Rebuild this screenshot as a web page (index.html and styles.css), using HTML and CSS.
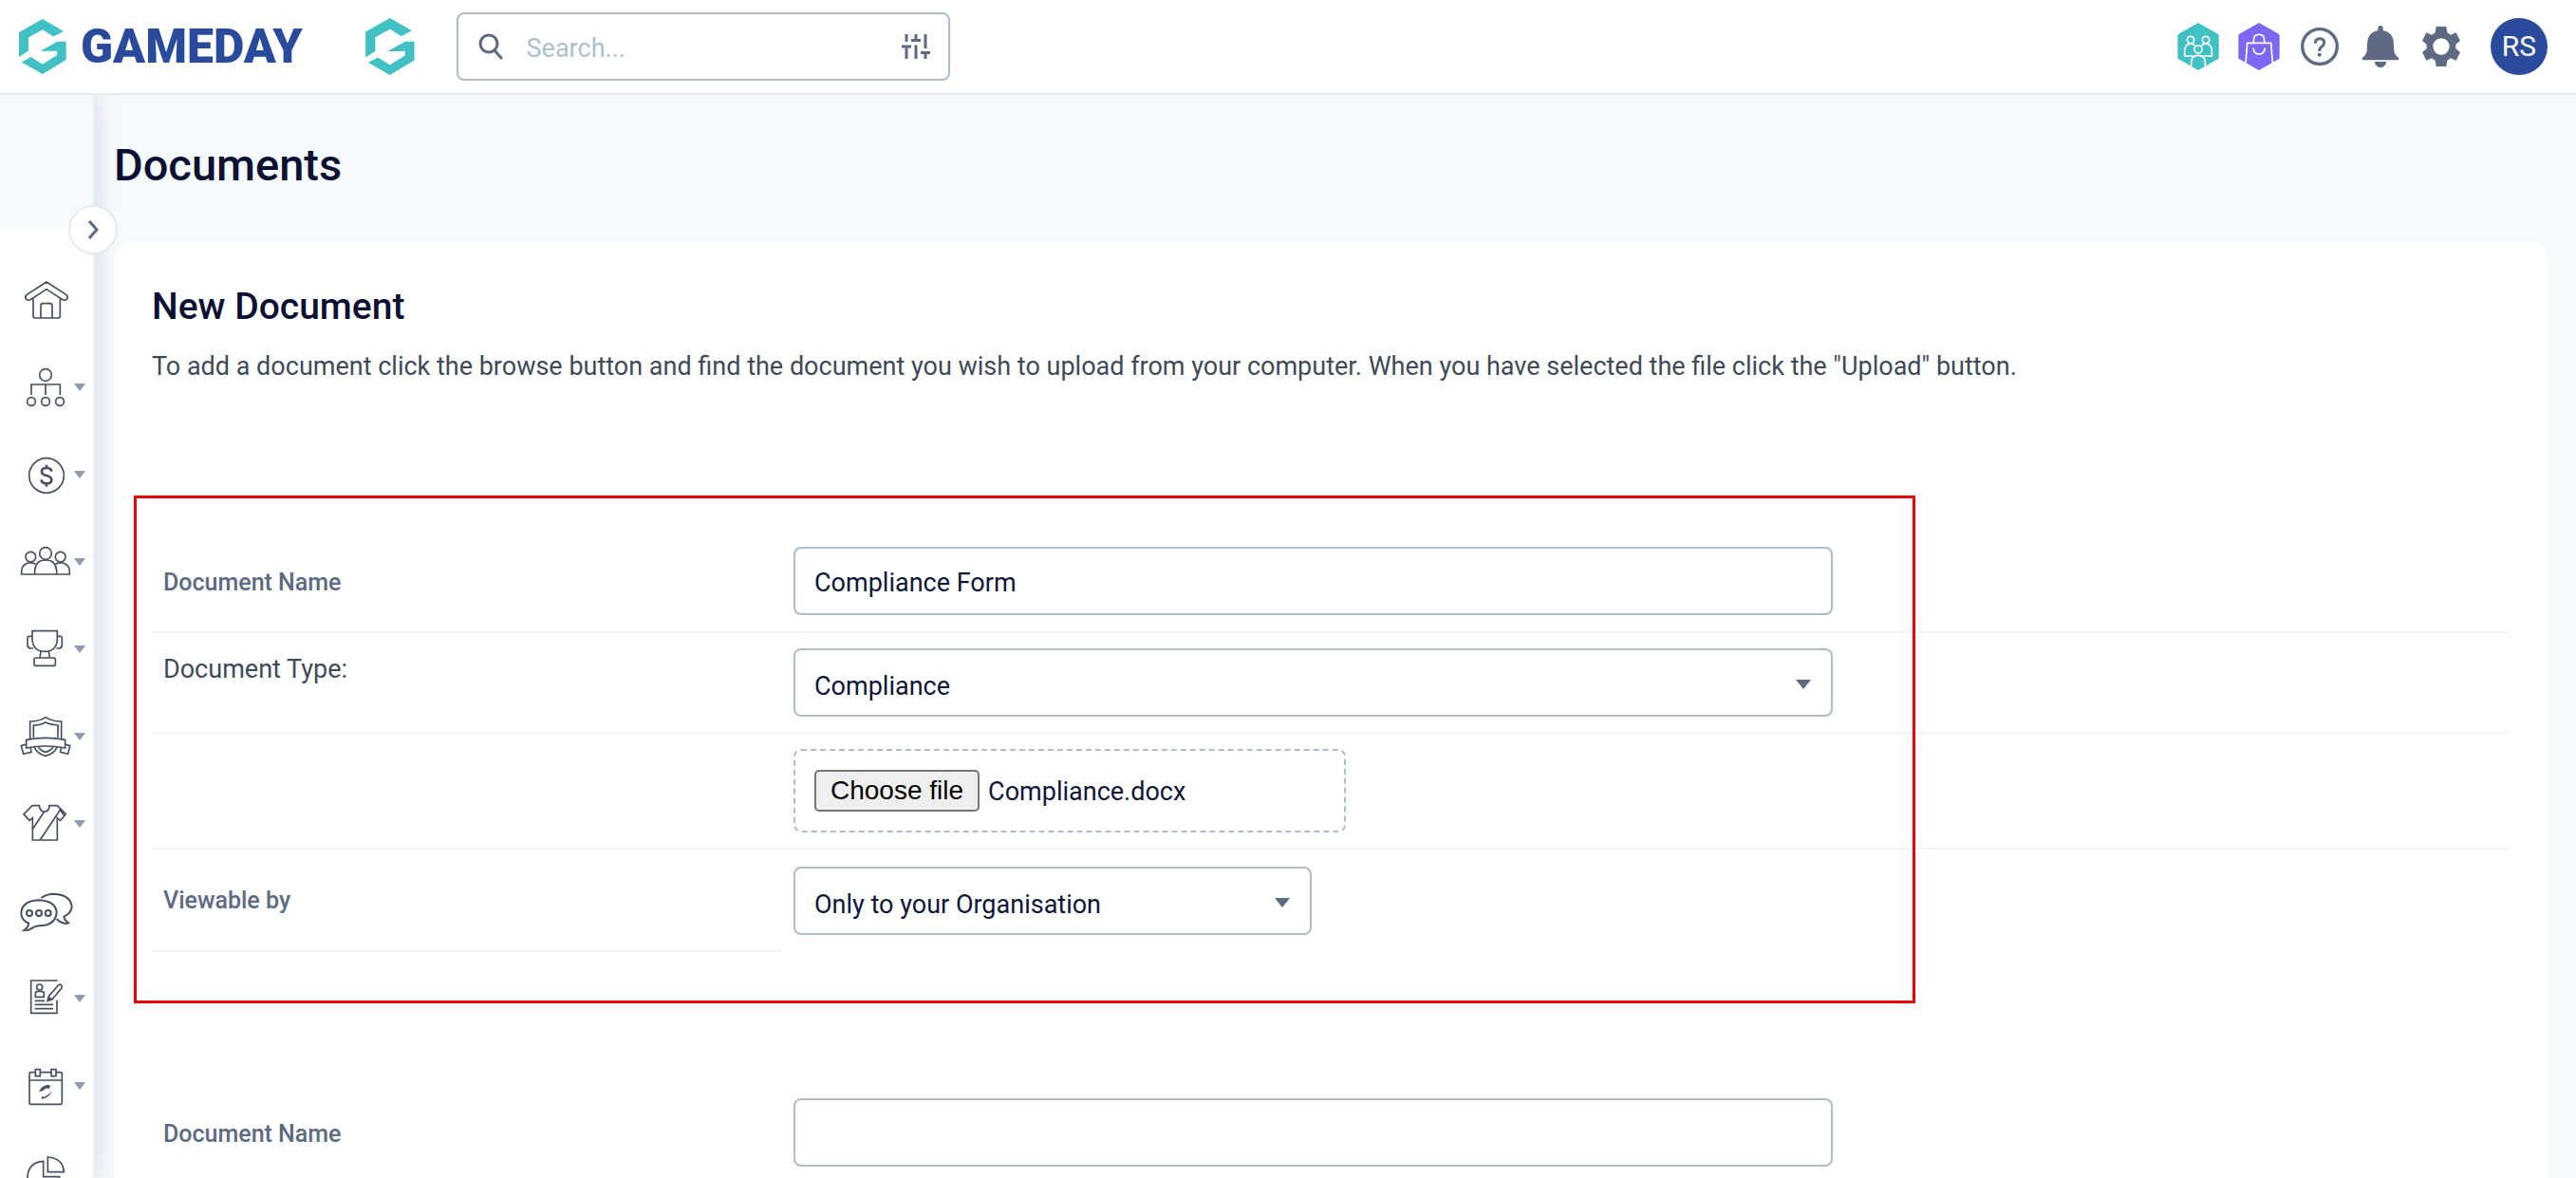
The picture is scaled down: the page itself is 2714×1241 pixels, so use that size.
FILE: index.html
```html
<!DOCTYPE html>
<html lang="en">
<head>
<meta charset="utf-8">
<title>Documents - GameDay</title>
<meta name="viewport" content="width=device-width, initial-scale=1">
<link rel="stylesheet" href="styles.css">
</head>
<body>
<header class="topbar">
  <a class="brand" href="#" aria-label="GameDay home">
    <svg class="brand-mark" viewBox="60 56 151 175" aria-hidden="true"><path d="M135 56 202 95 170 112 135 90 90 115V158L60 177V98ZM210 128V186L135 231 68 193 98 177 135 200 181 171V158H128L182 128Z"/></svg>
    <span class="brand-name">GAMEDAY</span>
  </a>
  <a class="org-logo" href="#" aria-label="Organisation">
    <svg viewBox="60 56 151 175" aria-hidden="true"><path d="M135 56 202 95 170 112 135 90 90 115V158L60 177V98ZM210 128V186L135 231 68 193 98 177 135 200 181 171V158H128L182 128Z"/></svg>
  </a>
  <form class="search" role="search">
    <svg class="search-icon" viewBox="0 0 26 28" aria-hidden="true"><circle cx="11" cy="11" r="9"/><path d="M17 18l7 8"/></svg>
    <input class="search-input" type="search" placeholder="Search..." aria-label="Search">
    <button class="search-filter" type="button" aria-label="Search filters">
      <svg viewBox="0 0 30 26" aria-hidden="true"><path d="M5 0v8M0 13h10M5 13v13M15 0v6M10 6.500h10M15 11.500v14.500M25 0v15M20 19.500h10M25 20v6"/></svg>
    </button>
  </form>
  <nav class="tools" aria-label="Account">
    <a href="#" class="tool" aria-label="Members"><svg width="44" height="50" viewBox="0 0 132 150"><path fill="#41c1c4" d="M66 0 128 35Q131 37 131 40V110Q131 113 128 115L66 150 4 115Q1 113 1 110V40Q1 37 4 35Z"/><g fill="none" stroke="#fff" stroke-width="5"><circle cx="42" cy="54" r="11"/><circle cx="90" cy="54" r="11"/><circle cx="66" cy="84" r="12"/><path d="M52 105H23V88Q23 68 42 66 52 66 56 73M76 73Q80 66 90 66 109 68 109 88V105H80M44 137V124Q46 103 66 103 86 103 88 124V137"/></g></svg></a>
    <a href="#" class="tool" aria-label="Shop"><svg width="44" height="50" viewBox="0 0 132 150"><path fill="#7c67f0" d="M66 0 128 35Q131 37 131 40V110Q131 113 128 115L66 150 4 115Q1 113 1 110V40Q1 37 4 35Z"/><path fill="none" stroke="#fff" stroke-width="5" d="M24 127 29 64H104L109 127M49 64V55Q49 37 66 37 83 37 83 55V64M48 80Q50 99 66 99 83 99 85 80"/></svg></a>
    <a href="#" class="tool" aria-label="Help"><svg width="40" height="40" viewBox="0 0 120 120"><circle cx="60" cy="60" r="55" fill="none" stroke="#5d6a82" stroke-width="10"/><path fill="none" stroke="#5d6a82" stroke-width="9" d="M46 50Q46 35 60 35 74 35 74 48 74 55 66 61 59 66 59 75"/><circle cx="59" cy="86" r="6" fill="#5d6a82"/></svg></a>
    <a href="#" class="tool" aria-label="Notifications"><svg width="40" height="44" viewBox="0 0 120 132"><path fill="#5d6a82" d="M60 0Q68 0 68 8V15Q98 22 101 48L103 80Q106 94 117 101 120 108 114 109H6Q0 108 3 101 14 94 17 80L19 48Q22 22 52 15V8Q52 0 60 0ZM41 114H79Q75 132 60 132 45 132 41 114Z"/></svg></a>
    <a href="#" class="tool" aria-label="Settings"><svg width="40" height="42" viewBox="0 0 120 126"><path fill="#5d6a82" fill-rule="evenodd" d="M44 0H76L79 19 90 26 107 19 120 45 106 56V70L120 81 107 107 90 100 79 107 76 126H44L41 107 30 100 13 107 0 81 14 70V56L0 45 13 19 30 26 41 19ZM60 37A26 26 0 1 0 60 89 26 26 0 1 0 60 37Z"/></svg></a>
    <button class="avatar" type="button">RS</button>
  </nav>
</header>

<div class="shell">
  <nav class="sidebar" aria-label="Main">
    <ul class="side-list">
      <li><a href="#" aria-label="Home"><svg viewBox="0 270 294 276"><path d="M147 351 210 392Q217 399 211 406 205 411 198 407L147 374 96 407Q89 411 83 406 77 399 84 392ZM105 404V458Q105 465 112 465H183Q190 465 190 458V404M129 464V426Q129 419 136 419H157Q165 419 165 426V464"/></svg></a></li>
      <li><a href="#" aria-label="Structure"><svg viewBox="0 546 294 276"><circle cx="144" cy="645" r="19"/><circle cx="99" cy="729" r="13"/><circle cx="144" cy="729" r="13"/><circle cx="189" cy="729" r="13"/><path d="M99 708V675H190V708M144 675V708"/><path class="caret" d="M234 672h36l-18 24z"/></svg></a></li>
      <li><a href="#" aria-label="Finance"><svg viewBox="0 822 294 276"><circle cx="147" cy="963" r="55"/><path stroke-width="8" d="M163 950Q162 939 147 939 132 939 132 950 132 960 147 963 163 967 163 977 163 988 147 988 131 988 131 976M147 929V940M147 987V998"/><path class="caret" d="M234 948h36l-18 24z"/></svg></a></li>
      <li><a href="#" aria-label="Members"><svg viewBox="0 48 294 276"><circle cx="144" cy="159" r="19"/><circle cx="97" cy="170" r="16"/><circle cx="191" cy="170" r="16"/><path d="M110 225V212Q113 180 144 180 176 180 179 212V225M112 193Q105 188 97 188 69 190 68 216V225H220V216Q219 190 191 188 183 188 176 193"/><path class="caret" d="M234 174h36l-18 24z"/></svg></a></li>
      <li><a href="#" aria-label="Competitions"><svg viewBox="0 324 294 276"><path d="M102 404H181V432Q178 469 142 469 105 469 102 432ZM100 421H90Q87 421 87 426V448Q88 459 96 459H105M182 421H192Q196 421 196 426V448Q195 459 187 459H178M129 469 126 488M154 469 157 488"/><rect x="108" y="489" width="67" height="25" rx="5"/><path class="caret" d="M234 450h36l-18 24z"/></svg></a></li>
      <li><a href="#" aria-label="Clubs"><svg viewBox="0 600 294 276"><path d="M95 744V690Q125 690 144 677 164 690 194 690V744M106 741V702Q128 702 144 693 161 702 183 702V741M83 748Q144 736 206 748V774Q144 762 83 774ZM83 762 67 767 74 793 99 787 97 773M206 762 221 767 215 793 191 787 193 773M109 772Q118 792 144 799 171 792 180 772M121 771Q128 782 144 787 161 782 168 771"/><path class="caret" d="M234 726h36l-18 24z"/></svg></a></li>
      <li><a href="#" aria-label="Uniforms"><svg viewBox="0 876 294 276"><path d="M102 956H124Q126 975 141 975 155 975 156 956H181L208 983 191 1003 181 995V1065H103V995L93 1003 75 983ZM140 975 104 1029M191 968 127 1064M188 967 203 988"/><path class="caret" d="M234 1002h36l-18 24z"/></svg></a></li>
      <li><a href="#" aria-label="Communications"><svg viewBox="0 102 294 276"><g stroke-width="6"><path d="M91 278Q67 268 67 245 70 207 122 205 177 207 179 245 175 286 122 286 108 288 97 296 88 301 76 300 89 291 91 278ZM130 198Q147 185 171 185 224 188 227 226 225 246 202 257 204 269 216 277 201 284 179 265"/><circle cx="93" cy="246" r="9"/><circle cx="123" cy="246" r="9"/><circle cx="152" cy="246" r="9"/></g></svg></a></li>
      <li><a href="#" aria-label="Registrations"><svg viewBox="0 378 294 276"><path d="M182 459H98V562H180V521M110 523H141M110 535H168M110 548H168"/><circle cx="125" cy="480" r="9"/><path d="M112 511V500Q112 493 119 493H132Q139 493 139 500V511ZM154 509 184 474Q189 469 194 474 198 479 194 484L165 518 151 522Z"/><path fill="#465062" d="M153 512 164 518 151 523Z"/><path class="caret" d="M234 504h36l-18 24z"/></svg></a></li>
      <li><a href="#" aria-label="Calendar"><svg viewBox="0 654 294 276"><rect x="93" y="749" width="103" height="101" rx="5"/><path d="M93 774H196"/><path fill="#fff" d="M112 740H127V761H112ZM162 740H177V761H162Z"/><path fill="#465062" stroke="none" d="M123 810Q130 791 154 788L159 793 154 802 147 799 134 808ZM164 808Q160 824 140 832L130 833 133 824 138 827Q153 823 164 808Z"/><path class="caret" d="M234 780h36l-18 24z"/></svg></a></li>
      <li><a href="#" aria-label="Reports"><svg viewBox="0 930 294 276"><path d="M151 1017Q199 1020 202 1064H151ZM137 1030Q89 1034 87 1080 89 1130 137 1134 183 1130 188 1079H137Z"/></svg></a></li>
    </ul>
  </nav>
  <button class="side-toggle" type="button" aria-label="Expand menu"><svg viewBox="0 0 12 20" aria-hidden="true"><path d="M2 1l8 9-8 9"/></svg></button>

  <main class="content">
    <h1 class="page-title">Documents</h1>
    <section class="card">
      <h2 class="card-title">New Document</h2>
      <p class="card-intro">To add a document click the browse button and find the document you wish to upload from your computer. When you have selected the file click the "Upload" button.</p>
      <form>
        <div class="entry">
          <div class="row row-first">
            <label class="cell-label" for="name1">Document Name</label>
            <div class="cell"><input class="field" id="name1" type="text" value="Compliance Form"></div>
          </div>
          <div class="row">
            <label class="cell-label cell-label-top" for="type1">Document Type:</label>
            <div class="cell"><div class="select"><select class="field" id="type1"><option>Compliance</option></select></div></div>
          </div>
          <div class="row">
            <span></span>
            <div class="cell">
              <div class="file-drop">
                <input class="file-input" id="file1" type="file" aria-label="Document file">
                <label class="file-button" for="file1">Choose file</label>
                <span class="file-name">Compliance.docx</span>
              </div>
            </div>
          </div>
          <div class="row row-last">
            <label class="cell-label" for="view1">Viewable by</label>
            <div class="cell"><div class="select select-short"><select class="field" id="view1"><option>Only to your Organisation</option></select></div></div>
          </div>
          <div class="highlight"></div>
        </div>
        <div class="entry">
          <div class="row row-first">
            <label class="cell-label" for="name2">Document Name</label>
            <div class="cell"><input class="field" id="name2" type="text"></div>
          </div>
        </div>
      </form>
    </section>
  </main>
</div>
</body>
</html>
```
FILE: styles.css
```css
* { box-sizing: border-box; }

body {
  margin: 0;
  height: 100vh;
  display: flex;
  flex-direction: column;
  overflow: hidden;
  background: #f5fafd;
  color: #3f4a59;
  font-family: Roboto, "Liberation Sans", sans-serif;
  font-size: 27px;
  line-height: 40px;
}

a { color: inherit; text-decoration: none; }
svg { display: block; }

/* Top bar */
.topbar {
  position: relative;
  z-index: 3;
  flex: none;
  height: 100px;
  display: flex;
  align-items: center;
  padding: 0 30px 0 20px;
  background: #fff;
  border-bottom: 2px solid #e6eaf3;
}
.brand { display: flex; align-items: center; gap: 15px; color: #2a4b9b; }
.brand-mark { width: 50px; height: 58px; fill: #41c1c4; }
.brand-name { font-size: 50px; font-weight: 900; line-height: 58px; }
.org-logo { margin-left: 66px; }
.org-logo svg { width: 52px; height: 60px; fill: #41c1c4; }

.search {
  display: flex;
  align-items: center;
  width: 520px;
  height: 72px;
  margin-left: 44px;
  padding: 0 19px 0 21px;
  border: 2px solid #aebccb;
  border-radius: 8px;
}
.search-icon { width: 26px; height: 28px; fill: none; stroke: #5d6a82; stroke-width: 3; stroke-linecap: round; }
.search-input {
  flex: 1;
  min-width: 0;
  margin-left: 25px;
  padding: 4px 0 0;
  border: 0;
  outline: 0;
  background: none;
  color: #10153a;
  font: inherit;
}
.search-input::placeholder { color: #aebfce; opacity: 1; }
.search-filter { padding: 0; border: 0; background: none; }
.search-filter svg { width: 30px; height: 26px; fill: none; stroke: #5d6a82; stroke-width: 3; }

.tools { display: flex; align-items: center; gap: 20px; margin-left: auto; }
.tool { display: flex; justify-content: center; width: 44px; }
.avatar {
  width: 60px;
  height: 60px;
  margin-left: 10px;
  padding: 0;
  border: 0;
  border-radius: 50%;
  background: #2a4b9b;
  color: #fff;
  font: 30px/60px Roboto, sans-serif;
}

/* Page shell */
.shell { position: relative; flex: 1; min-height: 0; display: flex; }

.sidebar {
  flex: none;
  width: 100px;
  padding-top: 140px;
  overflow: hidden;
  background: #fff linear-gradient(#f5fafd, #f5fafd) no-repeat 0 0 / 100% 140px;
  border-right: 2px solid #ebeff8;
  box-shadow: 0 0 24px rgba(70, 85, 120, 0.22);
}
.side-list { margin: 0; padding: 30px 0 0; list-style: none; }
.side-list svg {
  width: 98px;
  height: 92px;
  fill: none;
  stroke: #465062;
  stroke-width: 5;
}
.side-list .caret { fill: #8e9bb0; stroke: none; }

.side-toggle {
  position: absolute;
  z-index: 2;
  top: 116px;
  left: 72px;
  width: 52px;
  height: 52px;
  display: flex;
  align-items: center;
  justify-content: center;
  padding: 0;
  border: 2px solid #e6eaf1;
  border-radius: 50%;
  background: #fff;
}
.side-toggle svg { width: 12px; height: 20px; fill: none; stroke: #5d6a82; stroke-width: 3; }

.content {
  flex: 1;
  min-width: 0;
  padding: 44px 30px 0 20px;
  overflow: auto;
  scrollbar-width: none;
}
.page-title { margin: 0 0 50px; color: #0c1033; font-size: 47px; font-weight: 500; line-height: 60px; }

/* Card */
.card {
  position: relative;
  z-index: 1;
  padding: 45px 40px;
  border-radius: 20px;
  background: #fff;
}
.card-title { margin: 0 0 19px; color: #0c1033; font-size: 39px; font-weight: 500; line-height: 48px; }
.card-intro { margin: 0; }

/* Form rows */
.entry { position: relative; margin-top: 154px; }
.entry + .entry { margin-top: 138px; }
.row {
  display: grid;
  grid-template-columns: minmax(0, 664px) minmax(0, 1fr);
  border-bottom: 2px solid #f0f4fb;
}
.cell { padding: 16px 12px; }
.cell-label {
  display: flex;
  align-items: center;
  padding: 18px 12px 16px;
  color: #5d6a82;
  font-size: 25px;
  font-weight: 500;
}
.cell-label-top { align-items: flex-start; color: #3f4a59; font-size: 27px; font-weight: 400; }
.row-first .cell { padding-bottom: 17px; }
.row-last { border-bottom: 0; }
.row-last .cell { padding: 18px 12px; }
.row-last .cell-label { border-bottom: 2px solid #f0f4fb; }

.field {
  display: block;
  width: 100%;
  max-width: 1095px;
  height: 72px;
  padding: 4px 20px 0;
  border: 2px solid #aebccb;
  border-radius: 8px;
  background: #fff;
  color: #10153a;
  font: inherit;
}
.select { position: relative; max-width: 1095px; }
.select-short { max-width: 546px; }
.select .field { padding-top: 8px; appearance: none; }
.select::after {
  content: "";
  position: absolute;
  top: 33px;
  right: 23px;
  width: 16px;
  height: 10px;
  background: #5d6a82;
  clip-path: polygon(0 0, 100% 0, 50% 100%);
  pointer-events: none;
}

.file-drop {
  display: flex;
  align-items: center;
  gap: 9px;
  max-width: 582px;
  height: 88px;
  padding: 0 20px;
  border: 2px dashed #aebccb;
  border-radius: 8px;
}
.file-input { position: absolute; width: 1px; height: 1px; opacity: 0; }
.file-button {
  padding: 0 15px;
  border: 2px solid #767676;
  border-radius: 5px;
  background: #efefef;
  color: #000;
  font-family: "Liberation Sans", Arial, sans-serif;
  font-size: 28px;
}
.file-name { padding-top: 2px; color: #10153a; }

/* Call-out frame over the first entry */
.highlight {
  position: absolute;
  top: -38px;
  bottom: -54px;
  left: -19px;
  width: 1877px;
  max-width: 100%;
  border: 3px solid #e60505;
  pointer-events: none;
}
```
